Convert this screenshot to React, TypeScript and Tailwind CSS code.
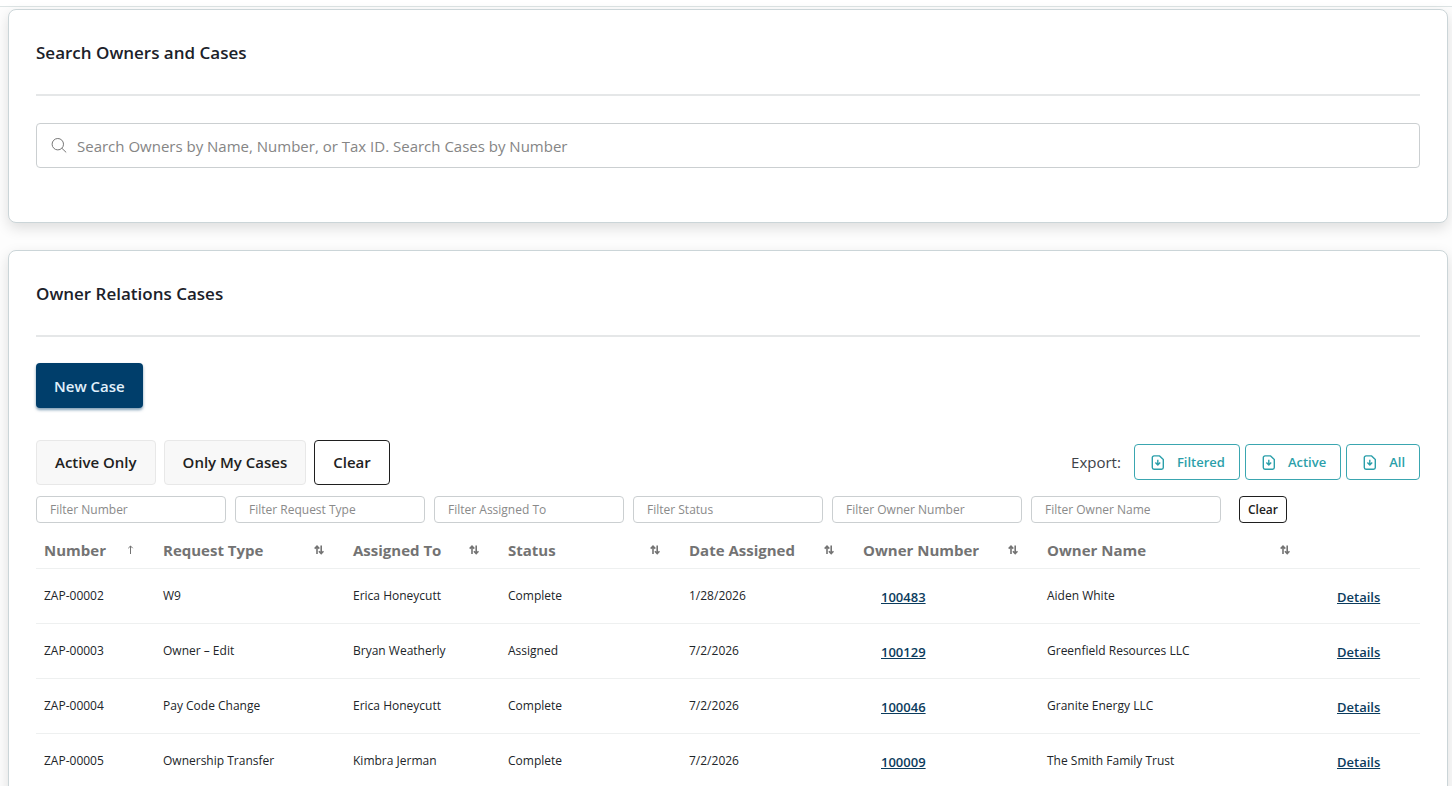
import type { ReactNode } from "react";

interface CaseRow {
  number: string;
  requestType: string;
  assignedTo: string;
  status: string;
  dateAssigned: string;
  ownerNumber: string;
  ownerName: string;
}

const cases: CaseRow[] = [
  {
    number: "ZAP-00002",
    requestType: "W9",
    assignedTo: "Erica Honeycutt",
    status: "Complete",
    dateAssigned: "1/28/2026",
    ownerNumber: "100483",
    ownerName: "Aiden White",
  },
  {
    number: "ZAP-00003",
    requestType: "Owner – Edit",
    assignedTo: "Bryan Weatherly",
    status: "Assigned",
    dateAssigned: "7/2/2026",
    ownerNumber: "100129",
    ownerName: "Greenfield Resources LLC",
  },
  {
    number: "ZAP-00004",
    requestType: "Pay Code Change",
    assignedTo: "Erica Honeycutt",
    status: "Complete",
    dateAssigned: "7/2/2026",
    ownerNumber: "100046",
    ownerName: "Granite Energy LLC",
  },
  {
    number: "ZAP-00005",
    requestType: "Ownership Transfer",
    assignedTo: "Kimbra Jerman",
    status: "Complete",
    dateAssigned: "7/2/2026",
    ownerNumber: "100009",
    ownerName: "The Smith Family Trust",
  },
];

const columns = [
  { label: "Number", width: "w-[119px]", sorted: true },
  { label: "Request Type", width: "w-[190px]" },
  { label: "Assigned To", width: "w-[155px]" },
  { label: "Status", width: "w-[181px]" },
  { label: "Date Assigned", width: "w-[174px]" },
  { label: "Owner Number", width: "w-[184px]" },
  { label: "Owner Name", width: "w-[272px]" },
];

const filters = [
  "Filter Number",
  "Filter Request Type",
  "Filter Assigned To",
  "Filter Status",
  "Filter Owner Number",
  "Filter Owner Name",
];

const SearchIcon = () => (
  <svg className="h-4 w-4 shrink-0" viewBox="0 0 16 16" fill="none" stroke="#777" aria-hidden="true">
    <circle cx="6.8" cy="6.2" r="5.7" />
    <path d="M10.9 10.3 15.2 14.4" />
  </svg>
);

const SortIcon = () => (
  <svg
    className="h-[10px] w-[10px]"
    viewBox="0 0 10 10"
    fill="none"
    stroke="currentColor"
    strokeWidth="1.6"
    aria-hidden="true"
  >
    <path d="M3 9V1.2M.7 3.6 3 1.2l2.3 2.4" />
    <path d="M7.2.5v8M4.9 6.2l2.3 2.4 2.3-2.4" />
  </svg>
);

const SortedIcon = () => (
  <svg className="h-[10px] w-[7px]" viewBox="0 0 7 10" fill="none" stroke="currentColor" aria-hidden="true">
    <path d="M3.5 9V1M1.3 3.2 3.5 1l2.2 2.2" />
  </svg>
);

const FileDownIcon = () => (
  <svg
    className="h-4 w-[14px]"
    viewBox="0 0 14 16"
    fill="none"
    stroke="currentColor"
    strokeWidth="1.4"
    strokeLinejoin="round"
    aria-hidden="true"
  >
    <path d="M3 .9h5.6l3.7 3.7v7.9a1.7 1.7 0 0 1-1.7 1.7H3a1.7 1.7 0 0 1-1.7-1.7V2.6A1.7 1.7 0 0 1 3 .9Z" />
    <path d="M6.8 4.8v5M4.4 7.5l2.4 2.4 2.4-2.4" />
  </svg>
);

interface CardProps {
  title: string;
  children: ReactNode;
}

const Card = ({ title, children }: CardProps) => {
  return (
    <section className="rounded-lg border border-[#cbd5d8] bg-white p-[27px] shadow-[0_5px_14px_rgba(0,0,0,0.13)]">
      <h2 className="border-b-2 border-[#e5e7e8] pb-[26px] text-[17px] leading-[31px] font-semibold text-[#1b2129]">
        {title}
      </h2>
      {children}
    </section>
  );
};

const ExportButton = ({ label }: { label: string }) => {
  return (
    <button
      type="button"
      className="flex h-9 items-center gap-3 rounded border border-[#3aa6b0] pt-px pr-[14px] pl-4 text-[13px] font-semibold text-[#2b9faa]"
    >
      <FileDownIcon />
      {label}
    </button>
  );
};

const CasesTable = () => {
  return (
    <table className="w-full table-fixed text-left">
      <thead>
        <tr className="h-[45px] border-b border-[#eef0f0] text-[15px] text-[#737373]">
          {columns.map(({ label, width, sorted }) => (
            <th key={label} className={`${width} pt-[9px] pr-[21px] pl-2 font-bold`}>
              <button type="button" className="flex w-full items-center justify-between whitespace-nowrap">
                {label}
                {sorted ? <SortedIcon /> : <SortIcon />}
              </button>
            </th>
          ))}
          <th className="w-[109px]" aria-label="Actions" />
        </tr>
      </thead>
      <tbody>
        {cases.map((row) => (
          <tr key={row.number} className="h-[55px] border-b border-[#eef0f0] text-xs text-[#212529]">
            <td className="px-2">{row.number}</td>
            <td className="px-2">{row.requestType}</td>
            <td className="px-2">{row.assignedTo}</td>
            <td className="px-2">{row.status}</td>
            <td className="px-2">{row.dateAssigned}</td>
            <td className="px-[26px] pt-1">
              <a href="#owner" className="text-[13px] font-semibold text-[#0b3c5d] underline">
                {row.ownerNumber}
              </a>
            </td>
            <td className="px-2">{row.ownerName}</td>
            <td className="px-[26px] pt-1">
              <a href="#details" className="text-[13px] font-semibold text-[#0b3c5d] underline">
                Details
              </a>
            </td>
          </tr>
        ))}
      </tbody>
    </table>
  );
};

export default function App() {
  return (
    <div className="h-screen overflow-y-auto bg-[#fdfdfd] font-['Open_Sans','Noto_Sans',sans-serif] [scrollbar-width:none]">
      <div className="h-[7px] border-b border-[#dde4e4] bg-white" />
      <main className="flex flex-col gap-[27px] pt-[2px] pr-1 pb-7 pl-2">
        <Card title="Search Owners and Cases">
          <label className="my-[27px] flex h-[45px] items-center gap-[10px] rounded border border-[#cbcfd1] px-[14px]">
            <SearchIcon />
            <input
              type="search"
              aria-label="Search owners and cases"
              placeholder="Search Owners by Name, Number, or Tax ID. Search Cases by Number"
              className="w-full pt-px text-[15px] outline-none placeholder:text-[#858585]"
            />
          </label>
        </Card>

        <Card title="Owner Relations Cases">
          <button
            type="button"
            className="mt-[26px] h-[45px] rounded bg-[#003e6b] px-[18px] pt-px text-[15px] font-semibold text-[#e0f0fb] shadow-[0_2px_3px_rgba(0,62,107,0.5)]"
          >
            New Case
          </button>

          <div className="mt-8 flex items-start justify-between">
            <div className="flex gap-2 text-[15px] font-semibold text-[#212121]">
              <button type="button" className="h-[45px] rounded border border-[#e8e8e8] bg-[#f8f8f8] px-[18px]">
                Active Only
              </button>
              <button type="button" className="h-[45px] rounded border border-[#e8e8e8] bg-[#f8f8f8] px-[18px]">
                Only My Cases
              </button>
              <button type="button" className="h-[45px] rounded border border-[#1f1f1f] bg-white px-[18px]">
                Clear
              </button>
            </div>
            <div className="flex items-center gap-[5px] pt-1">
              <span className="mr-2 text-[15px] font-medium text-[#3d4248]">Export:</span>
              <ExportButton label="Filtered" />
              <ExportButton label="Active" />
              <ExportButton label="All" />
            </div>
          </div>

          <div className="mt-[11px] flex gap-[9px]">
            {filters.map((filter) => (
              <input
                key={filter}
                type="text"
                aria-label={filter}
                placeholder={filter}
                className="h-[27px] w-[190px] rounded border border-[#cbcfd1] px-[13px] text-xs placeholder:text-[#8a8a8a]"
              />
            ))}
            <button
              type="button"
              className="ml-[9px] h-[27px] rounded border border-[#1f1f1f] px-2 text-xs font-semibold text-[#212121]"
            >
              Clear
            </button>
          </div>

          <CasesTable />
        </Card>
      </main>
    </div>
  );
}
